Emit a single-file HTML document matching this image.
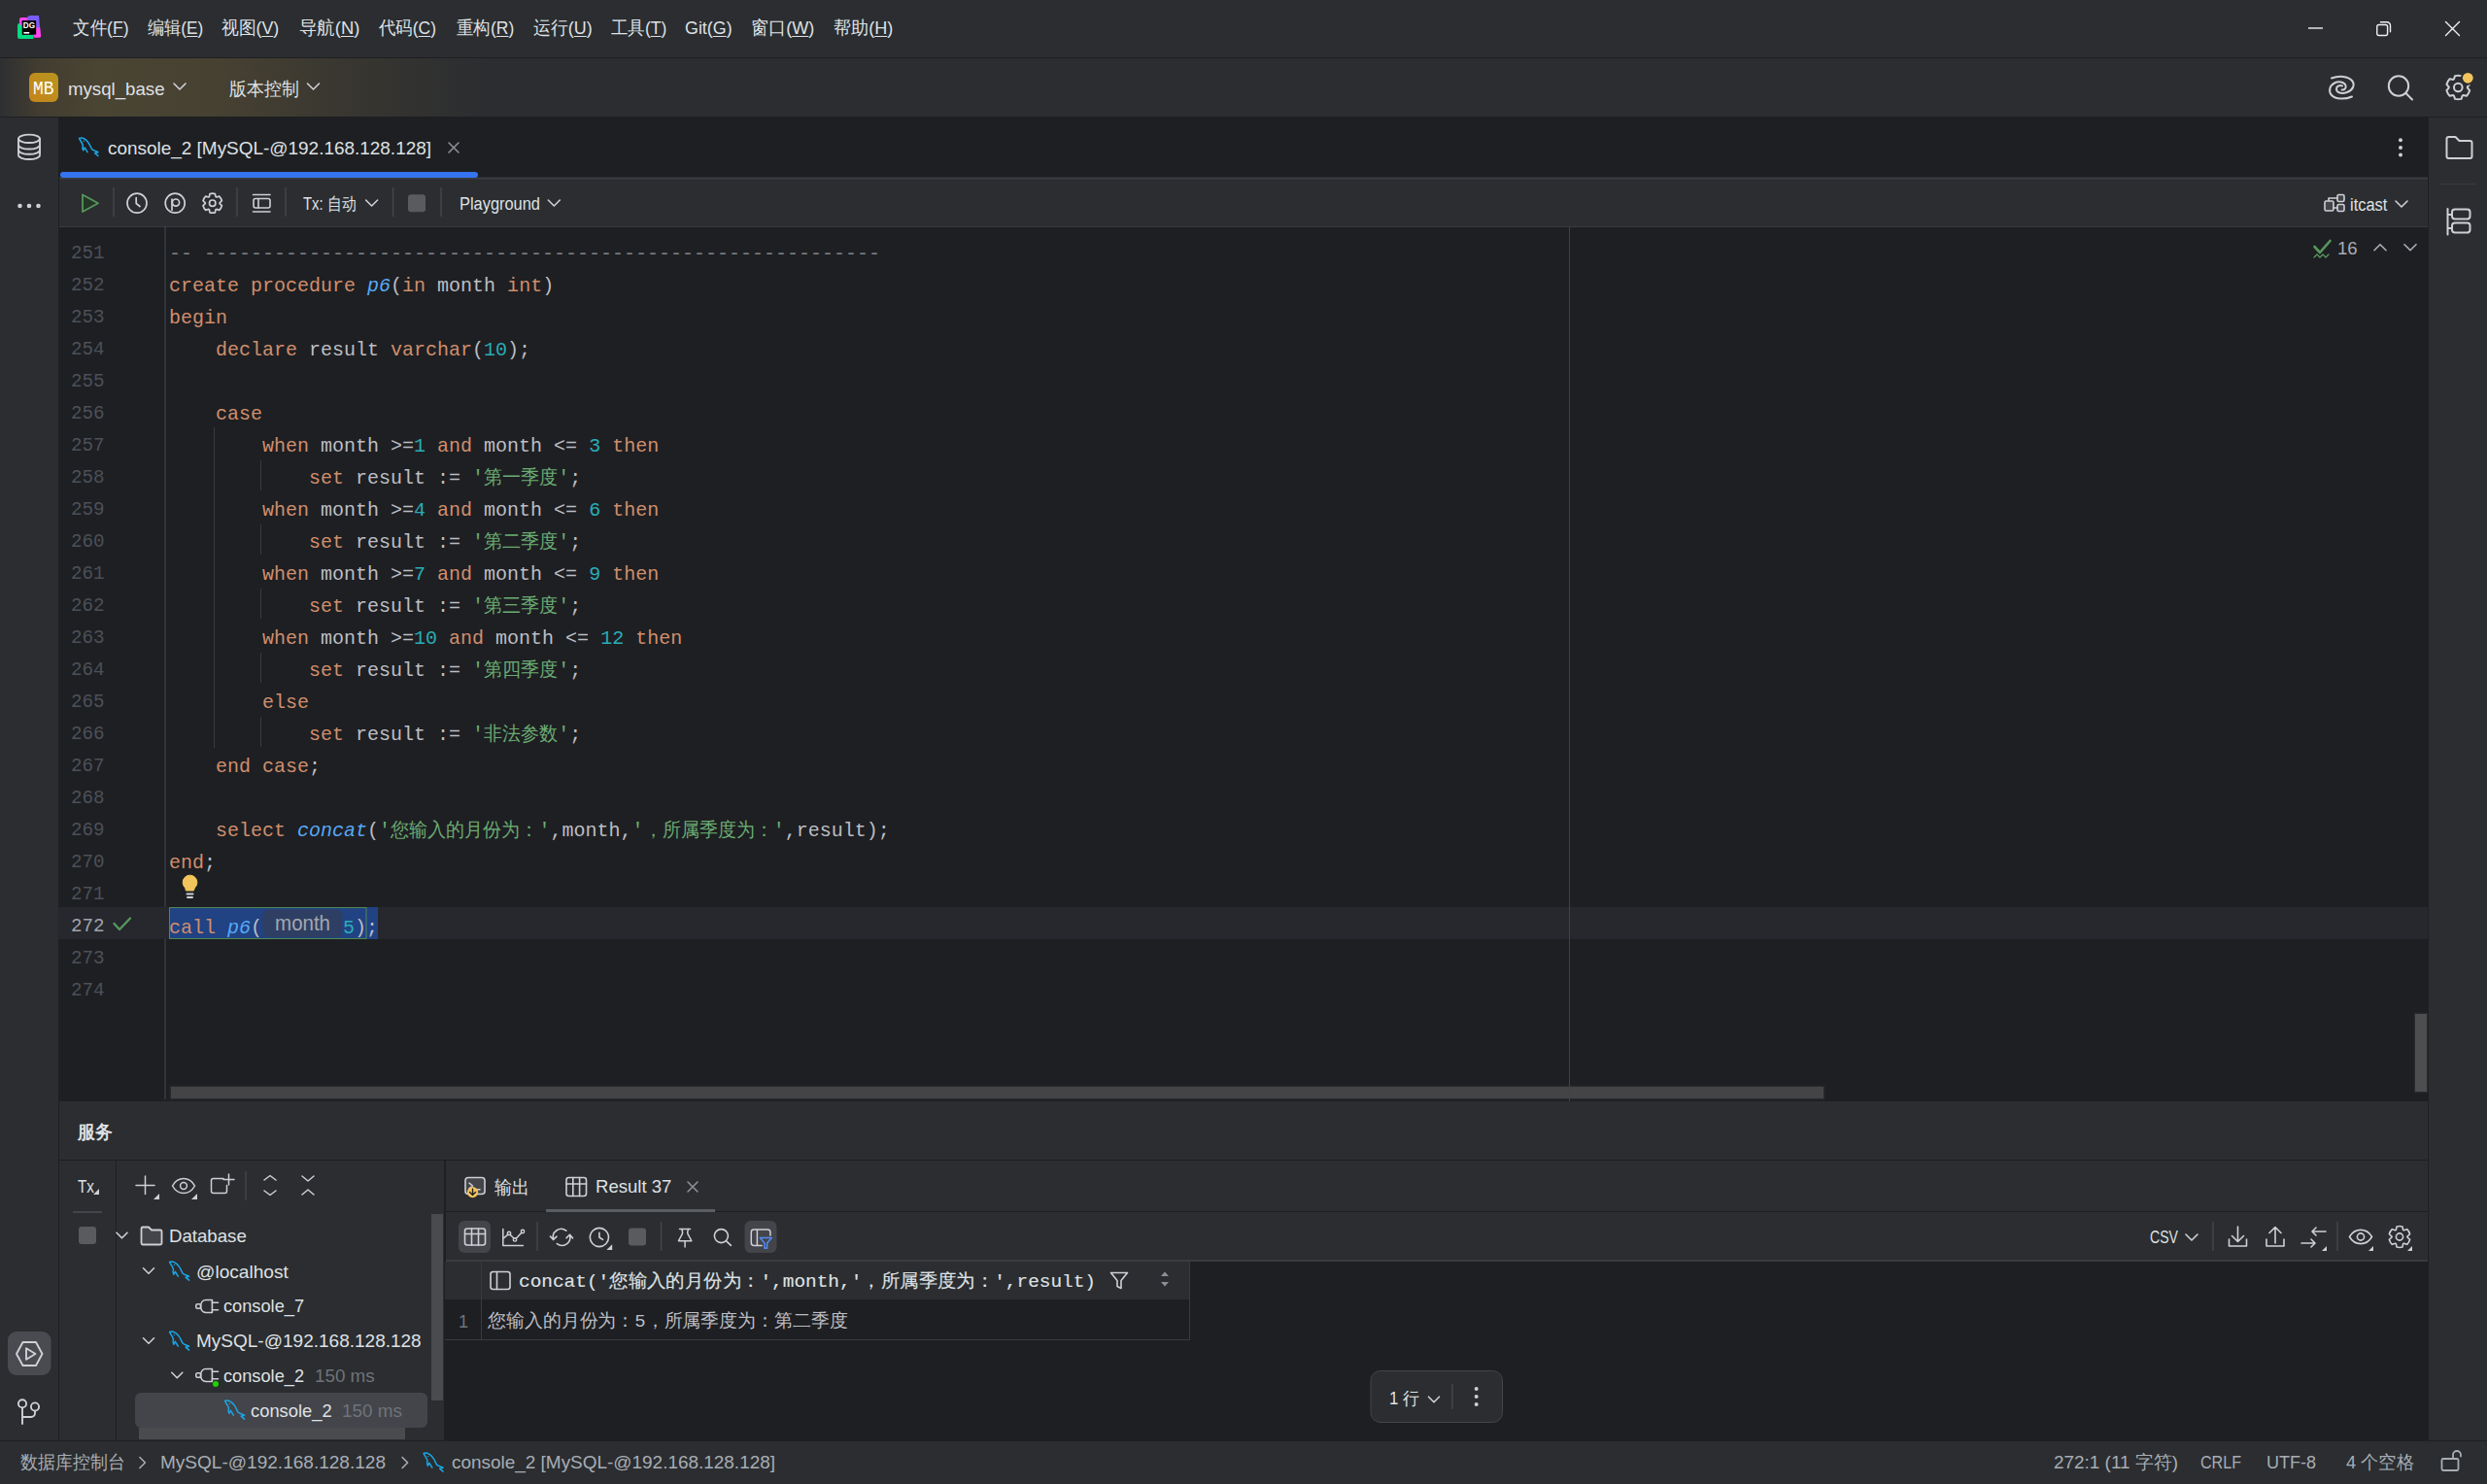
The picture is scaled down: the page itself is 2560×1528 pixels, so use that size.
<!DOCTYPE html><html><head><meta charset="utf-8"><style>
*{margin:0;padding:0;box-sizing:border-box}
html,body{width:2560px;height:1528px;overflow:hidden;background:#2B2D30}
body{position:relative;font-family:"Liberation Sans",sans-serif}
svg.ov{position:absolute;left:0;top:0}
.t{position:absolute;white-space:nowrap;transform-origin:0 50%}
.ln{position:absolute;left:60px;width:47.5px;text-align:right;font-family:"Liberation Mono",monospace;font-size:21px;line-height:33px;height:33px;transform:scaleX(0.915);transform-origin:100% 50%}
.cl{position:absolute;left:174px;font-family:"Liberation Mono",monospace;font-size:21px;line-height:33px;height:33px;white-space:pre;color:#BCBEC4;transform:scaleX(0.95238);transform-origin:0 50%}
.cj{font-size:19.95px}
.cj2{font-size:19px}
.hint{display:inline-block;width:87.15px;text-align:center;font-family:"Liberation Sans",sans-serif;font-size:21.5px;color:#A4A7AE;font-style:normal;position:relative;top:-3px}
u{text-decoration:underline;text-underline-offset:2px}
</style></head><body><svg class="ov" width="2560" height="1528" viewBox="0 0 2560 1528"><rect x="0.0" y="0.0" width="2560.0" height="1528.0" rx="0.0" fill="#2B2D30" /><rect x="0.0" y="0.0" width="2560.0" height="59.0" rx="0.0" fill="#2B2D30" /><rect x="0.0" y="59.0" width="2560.0" height="1.0" rx="0.0" fill="#1E1F22" /><defs><radialGradient id="pg" cx="200" cy="90" r="560" gradientUnits="userSpaceOnUse" gradientTransform="translate(200 90) scale(1 0.35) translate(-200 -90)"><stop offset="0" stop-color="#4C4432"/><stop offset="0.35" stop-color="#484232"/><stop offset="1" stop-color="#2B2D30"/></radialGradient><linearGradient id="mb" x1="0" y1="1" x2="1" y2="0"><stop offset="0" stop-color="#C6841B"/><stop offset="1" stop-color="#B8951F"/></linearGradient></defs><rect x="0.0" y="60.0" width="2560.0" height="60.0" rx="0.0" fill="#2B2D30" /><defs><linearGradient id="pg2" x1="0" y1="0" x2="500" y2="0" gradientUnits="userSpaceOnUse"><stop offset="0" stop-color="#2E2F31"/><stop offset="0.08" stop-color="#423D31"/><stop offset="0.2" stop-color="#4A4433"/><stop offset="0.45" stop-color="#474132"/><stop offset="0.72" stop-color="#383630"/><stop offset="1" stop-color="#2B2D30"/></linearGradient></defs><rect x="0.0" y="60.0" width="500.0" height="60.0" rx="0.0" fill="url(#pg2)" /><rect x="0.0" y="120.0" width="2560.0" height="1.0" rx="0.0" fill="#1E1F22" /><rect x="0.0" y="121.0" width="60.0" height="1363.0" rx="0.0" fill="#2B2D30" /><rect x="60.0" y="120.0" width="1.0" height="1364.0" rx="0.0" fill="#1E1F22" /><rect x="2500.0" y="121.0" width="60.0" height="1363.0" rx="0.0" fill="#2B2D30" /><rect x="2499.0" y="120.0" width="1.0" height="1364.0" rx="0.0" fill="#1E1F22" /><rect x="60.0" y="121.0" width="2439.0" height="61.0" rx="0.0" fill="#1E1F22" /><rect x="60.0" y="183.0" width="2439.0" height="50.0" rx="0.0" fill="#2B2D30" /><rect x="60.0" y="183.0" width="2439.0" height="1.6" rx="0.0" fill="#3A3C41" /><rect x="60.0" y="233.0" width="2439.0" height="1.0" rx="0.0" fill="#393B40" /><rect x="60.0" y="234.0" width="2439.0" height="900.0" rx="0.0" fill="#1E1F22" /><rect x="60.0" y="1134.0" width="2439.0" height="60.0" rx="0.0" fill="#2B2D30" /><rect x="60.0" y="1194.0" width="2439.0" height="1.0" rx="0.0" fill="#1E1F22" /><rect x="60.0" y="1195.0" width="2439.0" height="289.0" rx="0.0" fill="#2B2D30" /><rect x="0.0" y="1483.0" width="2560.0" height="1.0" rx="0.0" fill="#1E1F22" /><rect x="0.0" y="1484.0" width="2560.0" height="44.0" rx="0.0" fill="#2B2D30" /><rect x="60.0" y="120.0" width="1.0" height="1364.0" rx="0.0" fill="#1E1F22" /><rect x="2499.0" y="120.0" width="1.0" height="1364.0" rx="0.0" fill="#1E1F22" /><g><path d="M18 26 Q18 24 20 24 L23 24 L23 36 L34 36 L34.5 40 L20 40 Q18 40 18 38 Z" fill="#00DC82"/><path d="M20 20 Q20 18 22 18 L27.5 18 L29.5 21.2 L22.7 21.2 L22.7 27.5 L20 24.5 Z" fill="#FF45ED"/><path d="M27.5 18.5 Q28.5 16 31 16 L40 16 L41.2 29 L37.1 29 L37.1 21.2 L29.5 21.2 Z" fill="#7B5CFA"/><path d="M37.1 28.5 L41.3 28.5 L42.2 37 Q42.2 38.7 40.5 38.7 L34.5 38.7 L34 35.5 L37.1 35.5 Z" fill="#FF45ED"/><rect x="22.7" y="21.2" width="14.4" height="14.3" fill="#000"/><text x="23.8" y="29" font-family="Liberation Sans" font-weight="bold" font-size="8.2" fill="#fff">DG</text><rect x="24.4" y="33" width="5.8" height="1.6" fill="#fff"/></g><line x1="2376.0" y1="29.0" x2="2391.0" y2="29.0" stroke="#F0F0F0" stroke-width="1.4"/><rect x="2446.8" y="25.5" width="10.8" height="11.0" rx="2.0" fill="none" stroke="#F0F0F0" stroke-width="1.4"/><path d="M2450.5 22.7 h6.5 a3.5 3.5 0 0 1 3.5 3.5 v6.5" stroke="#F0F0F0" stroke-width="1.4" fill="none" stroke-linecap="round" stroke-linejoin="round" /><path d="M2517.5 22.5 L2531.5 36.5 M2531.5 22.5 L2517.5 36.5" stroke="#F0F0F0" stroke-width="1.4" fill="none" stroke-linecap="round" stroke-linejoin="round" /><rect x="30.0" y="75.0" width="30.0" height="30.0" rx="6.0" fill="url(#mb)" /><path d="M179.0 86.0 L185.0 92.0 L191.0 86.0" stroke="#CED0D6" stroke-width="1.6" fill="none" stroke-linecap="round" stroke-linejoin="round" /><path d="M316.5 86.0 L322.5 92.0 L328.5 86.0" stroke="#CED0D6" stroke-width="1.6" fill="none" stroke-linecap="round" stroke-linejoin="round" /><path d="M2400 80.5 C2408 77.5 2417 78.5 2421 83 C2424.5 87 2422 93 2416 95 C2410 97 2405 95.5 2405 91.5 C2405 88.5 2408.5 87.5 2411 88.5 M2421 99.5 C2414 102.5 2404 102.5 2400 98 C2396.5 94 2398 88 2403 85.5 C2407 83.5 2413 84 2414.5 88 C2415.5 91 2413 93 2410.5 92.5" stroke="#CED0D6" stroke-width="2" fill="none" stroke-linecap="round" stroke-linejoin="round" /><circle cx="2469" cy="88.5" r="10.2" stroke="#CED0D6" stroke-width="2" fill="none"/><path d="M2476.5 96 L2483 102.5" stroke="#CED0D6" stroke-width="2" fill="none" stroke-linecap="round" stroke-linejoin="round" /><path d="M2525.95 81.44 L2527.02 78.15 A12.30 12.30 0 0 1 2533.58 78.15 L2534.65 81.44 A9.60 9.60 0 0 1 2535.54 81.96 L2538.93 81.23 A12.30 12.30 0 0 1 2542.21 86.91 L2539.89 89.49 A9.60 9.60 0 0 1 2539.89 90.51 L2542.21 93.09 A12.30 12.30 0 0 1 2538.93 98.77 L2535.54 98.04 A9.60 9.60 0 0 1 2534.65 98.56 L2533.58 101.85 A12.30 12.30 0 0 1 2527.02 101.85 L2525.95 98.56 A9.60 9.60 0 0 1 2525.06 98.04 L2521.67 98.77 A12.30 12.30 0 0 1 2518.39 93.09 L2520.71 90.51 A9.60 9.60 0 0 1 2520.71 89.49 L2518.39 86.91 A12.30 12.30 0 0 1 2521.67 81.23 L2525.06 81.96 A9.60 9.60 0 0 1 2525.95 81.44 Z" stroke="#CED0D6" stroke-width="2" fill="none" stroke-linecap="round" stroke-linejoin="round" /><circle cx="2530.3" cy="90.0" r="4.3" stroke="#CED0D6" stroke-width="2" fill="none"/><circle cx="2540.3" cy="80.3" r="7.5" fill="#2B2D30"/><circle cx="2540.3" cy="80.3" r="5.4" fill="#F2C55C"/><g stroke="#CED0D6" stroke-width="1.9" fill="none"><ellipse cx="30" cy="142.8" rx="11" ry="4.2"/><path d="M19 142.8 V159.8 M41 142.8 V159.8"/><path d="M19 149.3 a11 4.2 0 0 0 22 0 M19 154.6 a11 4.2 0 0 0 22 0 M19 159.8 a11 4.2 0 0 0 22 0"/></g><circle cx="20.5" cy="212" r="2.3" fill="#CED0D6"/><circle cx="30.0" cy="212" r="2.3" fill="#CED0D6"/><circle cx="39.5" cy="212" r="2.3" fill="#CED0D6"/><rect x="8.0" y="1371.0" width="44.5" height="45.0" rx="9.0" fill="#4A4B50" /><path d="M23.5 1382 L37 1382 L43.5 1394 L37 1406 L23.5 1406 L17 1394 Z" stroke="#CED0D6" stroke-width="1.9" fill="none" stroke-linecap="round" stroke-linejoin="round" /><path d="M27 1388.2 L36.5 1394 L27 1399.8 Z" stroke="#CED0D6" stroke-width="1.9" fill="none" stroke-linecap="round" stroke-linejoin="round" /><circle cx="23" cy="1445.3" r="4.1" stroke="#CED0D6" stroke-width="1.9" fill="none"/><circle cx="36" cy="1448.5" r="4.1" stroke="#CED0D6" stroke-width="1.9" fill="none"/><path d="M23 1449.5 V1466 M36 1452.6 V1455 a4 4 0 0 1 -4 4 H23" stroke="#CED0D6" stroke-width="1.9" fill="none" stroke-linecap="round" stroke-linejoin="round" /><path d="M2518.5 143 a2 2 0 0 1 2-2 h7 l4 4 h11 a2 2 0 0 1 2 2 v14 a2 2 0 0 1 -2 2 h-22 a2 2 0 0 1 -2-2 z" stroke="#CED0D6" stroke-width="2" fill="none" stroke-linecap="round" stroke-linejoin="round" /><line x1="2512.0" y1="189.5" x2="2548.0" y2="189.5" stroke="#393B40" stroke-width="1"/><path d="M2519.5 215 V241.5" stroke="#CED0D6" stroke-width="2" fill="none" stroke-linecap="round" stroke-linejoin="round" /><path d="M2520 221 h3 M2520 235 h3" stroke="#CED0D6" stroke-width="2" fill="none" stroke-linecap="round" stroke-linejoin="round" /><rect x="2524.0" y="215.5" width="18.5" height="10.0" rx="3.0" fill="none" stroke="#CED0D6" stroke-width="2"/><rect x="2524.0" y="229.5" width="18.5" height="10.0" rx="3.0" fill="none" stroke="#CED0D6" stroke-width="2"/><g transform="translate(81.0 141.0) scale(0.950)"><path d="M0.5 1.5 C3 0.5 7 2 10 5.5 C12 8 13.5 12 14.5 13.5 C16 15 19 15.5 21 16.5 L17.5 17.5 L21 20.5 M0.5 1.5 C2 4 4 7 4.5 9 C4 11 4 13 5 14.5 L6.5 11.5 L9.5 16.5" stroke="#1AA7E8" stroke-width="1.58" fill="none" stroke-linejoin="round" stroke-linecap="round"/><circle cx="5.5" cy="4.5" r="0.7" fill="#1AA7E8"/></g><path d="M462 147 L472 157 M472 147 L462 157" stroke="#8C8F96" stroke-width="1.6" fill="none" stroke-linecap="round" stroke-linejoin="round" /><rect x="62.0" y="177.0" width="430.0" height="6.0" rx="3.0" fill="#3574F0" /><circle cx="2471" cy="144.3" r="2" fill="#CED0D6"/><circle cx="2471" cy="152.0" r="2" fill="#CED0D6"/><circle cx="2471" cy="159.6" r="2" fill="#CED0D6"/><path d="M85 200.5 L101 209.2 L85 218 Z" stroke="#57965C" stroke-width="1.8" fill="#253627" stroke-linecap="round" stroke-linejoin="round" /><line x1="117.0" y1="193.0" x2="117.0" y2="223.0" stroke="#43454A" stroke-width="1.5"/><line x1="244.0" y1="193.0" x2="244.0" y2="223.0" stroke="#43454A" stroke-width="1.5"/><line x1="294.0" y1="193.0" x2="294.0" y2="223.0" stroke="#43454A" stroke-width="1.5"/><line x1="404.6" y1="193.0" x2="404.6" y2="223.0" stroke="#43454A" stroke-width="1.5"/><line x1="454.0" y1="193.0" x2="454.0" y2="223.0" stroke="#43454A" stroke-width="1.5"/><circle cx="141" cy="209.2" r="10" stroke="#CED0D6" stroke-width="1.7" fill="none"/><path d="M140.2 203.5 V209.5 L144 212.5" stroke="#CED0D6" stroke-width="1.7" fill="none" stroke-linecap="round" stroke-linejoin="round" /><circle cx="180.2" cy="209.2" r="10" stroke="#CED0D6" stroke-width="1.7" fill="none"/><path d="M177 216.5 V205" stroke="#CED0D6" stroke-width="1.7" fill="none" stroke-linecap="round" stroke-linejoin="round" /><circle cx="181" cy="208.6" r="3.6" stroke="#CED0D6" stroke-width="1.7" fill="none"/><path d="M215.35 202.60 L216.03 199.56 A10.00 10.00 0 0 1 221.37 199.56 L222.05 202.60 A7.40 7.40 0 0 1 222.74 203.00 L225.71 202.07 A10.00 10.00 0 0 1 228.38 206.69 L226.09 208.80 A7.40 7.40 0 0 1 226.09 209.60 L228.38 211.71 A10.00 10.00 0 0 1 225.71 216.33 L222.74 215.40 A7.40 7.40 0 0 1 222.05 215.80 L221.37 218.84 A10.00 10.00 0 0 1 216.03 218.84 L215.35 215.80 A7.40 7.40 0 0 1 214.66 215.40 L211.69 216.33 A10.00 10.00 0 0 1 209.02 211.71 L211.31 209.60 A7.40 7.40 0 0 1 211.31 208.80 L209.02 206.69 A10.00 10.00 0 0 1 211.69 202.07 L214.66 203.00 A7.40 7.40 0 0 1 215.35 202.60 Z" stroke="#CED0D6" stroke-width="1.7" fill="none" stroke-linecap="round" stroke-linejoin="round" /><circle cx="218.7" cy="209.2" r="3.2" stroke="#CED0D6" stroke-width="1.7" fill="none"/><path d="M260.5 200.5 h17.5 M260.5 218 h17.5" stroke="#CED0D6" stroke-width="1.6" fill="none" stroke-linecap="round" stroke-linejoin="round" /><rect x="261.0" y="204.5" width="17.0" height="9.5" rx="2.0" fill="none" stroke="#CED0D6" stroke-width="1.6"/><path d="M266 205 v9" stroke="#CED0D6" stroke-width="1.6" fill="none" stroke-linecap="round" stroke-linejoin="round" /><path d="M376.6 206.0 L382.6 212.0 L388.6 206.0" stroke="#CED0D6" stroke-width="1.6" fill="none" stroke-linecap="round" stroke-linejoin="round" /><rect x="420.0" y="200.3" width="18.0" height="18.0" rx="3.0" fill="#5A5B5E" /><path d="M564.3 206.0 L570.3 212.0 L576.3 206.0" stroke="#CED0D6" stroke-width="1.6" fill="none" stroke-linecap="round" stroke-linejoin="round" /><rect x="2393.0" y="207.0" width="9.0" height="10.0" rx="1.5" fill="#43454A" stroke="#CED0D6" stroke-width="1.6"/><rect x="2406.0" y="200.5" width="7.0" height="7.0" rx="1.5" fill="#43454A" stroke="#CED0D6" stroke-width="1.6"/><rect x="2406.0" y="210.5" width="7.0" height="7.0" rx="1.5" fill="#43454A" stroke="#CED0D6" stroke-width="1.6"/><path d="M2397 206.5 V204 h9 M2402 214 h4" stroke="#CED0D6" stroke-width="1.6" fill="none" stroke-linecap="round" stroke-linejoin="round" /><path d="M2466.0 207.0 L2472.0 213.0 L2478.0 207.0" stroke="#CED0D6" stroke-width="1.6" fill="none" stroke-linecap="round" stroke-linejoin="round" /><rect x="169.0" y="234.0" width="2.0" height="898.0" rx="0.0" fill="#313438" /><rect x="60.0" y="934.0" width="2439.0" height="33.0" rx="0.0" fill="#26282E" /><rect x="174.0" y="934.0" width="215.0" height="33.0" rx="0.0" fill="#214283" /><rect x="174.5" y="934.5" width="202.5" height="32.0" rx="0.0" fill="none" stroke="#4E8A52" stroke-width="1"/><rect x="270.5" y="936.5" width="82.0" height="28.5" rx="6.0" fill="#2E3F63" /><rect x="220.0" y="440.0" width="1.0" height="330.0" rx="0.0" fill="#393B40" /><rect x="268.0" y="474.0" width="1.0" height="31.0" rx="0.0" fill="#393B40" /><rect x="268.0" y="540.0" width="1.0" height="31.0" rx="0.0" fill="#393B40" /><rect x="268.0" y="606.0" width="1.0" height="31.0" rx="0.0" fill="#393B40" /><rect x="268.0" y="672.0" width="1.0" height="31.0" rx="0.0" fill="#393B40" /><rect x="268.0" y="738.0" width="1.0" height="31.0" rx="0.0" fill="#393B40" /><path d="M190.5 914 a7.4 7.4 0 1 1 10 0 l-1.2 3 h-7.6 z" stroke="#F2C55C" stroke-width="1" fill="#F2C55C" stroke-linecap="round" stroke-linejoin="round" /><rect x="191.5" y="919.5" width="8.0" height="2.0" rx="1.0" fill="#CED0D6" /><rect x="192.0" y="923.0" width="7.0" height="2.0" rx="1.0" fill="#CED0D6" /><path d="M117.5 951 L123 957 L134 945.5" stroke="#57965C" stroke-width="2.4" fill="none" stroke-linecap="round" stroke-linejoin="round" /><path d="M2382.5 254 L2388 260 L2398.5 248" stroke="#57965C" stroke-width="2.6" fill="none" stroke-linecap="round" stroke-linejoin="round" /><path d="M2382 265 l3 -3 l3 3 l3 -3 l3 3 l3 -3" stroke="#57965C" stroke-width="1.4" fill="none" stroke-linecap="round" stroke-linejoin="round" /><path d="M2444.0 257.7 L2450.0 251.7 L2456.0 257.7" stroke="#A8ADB5" stroke-width="1.6" fill="none" stroke-linecap="round" stroke-linejoin="round" /><path d="M2475.0 251.7 L2481.0 257.7 L2487.0 251.7" stroke="#A8ADB5" stroke-width="1.6" fill="none" stroke-linecap="round" stroke-linejoin="round" /><rect x="2484.5" y="1042.5" width="15.0" height="83.0" rx="1.0" fill="#28292B" /><rect x="2486.0" y="1044.0" width="12.0" height="80.0" rx="0.0" fill="#4D4E50" /><rect x="174.5" y="1117.5" width="1704.0" height="15.0" rx="0.0" fill="#28292B" /><rect x="176.0" y="1119.0" width="1701.0" height="12.0" rx="0.0" fill="#444446" /><rect x="1615.0" y="234.0" width="1.0" height="900.0" rx="0.0" fill="#404247" /><rect x="119.0" y="1195.0" width="1.0" height="288.0" rx="0.0" fill="#1E1F22" /><rect x="457.0" y="1195.0" width="2.0" height="288.0" rx="0.0" fill="#1E1F22" /><path d="M96 1230 L102 1224 L102 1230 Z" fill="#CED0D6"/><rect x="75.0" y="1247.0" width="30.0" height="2.0" rx="0.0" fill="#43454A" /><rect x="81.0" y="1263.0" width="18.0" height="18.0" rx="3.0" fill="#5A5B5E" /><path d="M149.5 1211 V1229.5 M140 1220.5 H159" stroke="#CED0D6" stroke-width="1.5" fill="none" stroke-linecap="round" stroke-linejoin="round" /><path d="M158 1235 L164 1229 L164 1235 Z" fill="#CED0D6"/><path d="M177.5 1221 C183 1211 195 1211 200.5 1221 C195 1231 183 1231 177.5 1221 Z" stroke="#CED0D6" stroke-width="1.5" fill="none" stroke-linecap="round" stroke-linejoin="round" /><circle cx="189" cy="1221" r="3.4" stroke="#CED0D6" stroke-width="1.5" fill="none"/><path d="M197 1235 L203 1229 L203 1235 Z" fill="#CED0D6"/><path d="M230 1213.5 h-10.5 a2 2 0 0 0 -2 2 v11 a2 2 0 0 0 2 2 h12 a2 2 0 0 0 2 -2 v-6" stroke="#CED0D6" stroke-width="1.5" fill="none" stroke-linecap="round" stroke-linejoin="round" /><path d="M235.5 1209 V1220 M230 1214.5 H241" stroke="#CED0D6" stroke-width="1.5" fill="none" stroke-linecap="round" stroke-linejoin="round" /><line x1="253.0" y1="1206.0" x2="253.0" y2="1236.0" stroke="#43454A" stroke-width="1.5"/><path d="M272 1215 L278 1210.5 L284 1215 M272 1226 L278 1230.5 L284 1226" stroke="#CED0D6" stroke-width="1.5" fill="none" stroke-linecap="round" stroke-linejoin="round" /><path d="M311 1211 L317 1216 L323 1211 M311 1230 L317 1225 L323 1230" stroke="#CED0D6" stroke-width="1.5" fill="none" stroke-linecap="round" stroke-linejoin="round" /><rect x="444.0" y="1250.0" width="12.0" height="192.0" rx="0.0" fill="#4A4B4E" /><rect x="139.0" y="1434.0" width="301.0" height="36.0" rx="6.0" fill="#43454A" /><rect x="143.0" y="1470.0" width="274.0" height="12.0" rx="0.0" fill="#4A4B4E" /><path d="M120.0 1269.2 L125.5 1274.8 L131.0 1269.2" stroke="#CED0D6" stroke-width="1.6" fill="none" stroke-linecap="round" stroke-linejoin="round" /><path d="M145.5 1265 a1.5 1.5 0 0 1 1.5 -1.5 h6 l3 3 h9 a1.5 1.5 0 0 1 1.5 1.5 v12 a1.5 1.5 0 0 1 -1.5 1.5 h-18 a1.5 1.5 0 0 1 -1.5 -1.5 z" stroke="#CED0D6" stroke-width="1.8" fill="#43454A" stroke-linecap="round" stroke-linejoin="round" /><path d="M147.5 1305.8 L153.0 1311.2 L158.5 1305.8" stroke="#CED0D6" stroke-width="1.6" fill="none" stroke-linecap="round" stroke-linejoin="round" /><g transform="translate(174.0 1298.0) scale(0.980)"><path d="M0.5 1.5 C3 0.5 7 2 10 5.5 C12 8 13.5 12 14.5 13.5 C16 15 19 15.5 21 16.5 L17.5 17.5 L21 20.5 M0.5 1.5 C2 4 4 7 4.5 9 C4 11 4 13 5 14.5 L6.5 11.5 L9.5 16.5" stroke="#1AA7E8" stroke-width="1.53" fill="none" stroke-linejoin="round" stroke-linecap="round"/><circle cx="5.5" cy="4.5" r="0.7" fill="#1AA7E8"/></g><path d="M218.4 1338.5 V1351.5 H212.0 C208.5 1351.5 206.6 1348.5 206.6 1345.0 C206.6 1341.5 208.5 1338.5 212.0 1338.5 Z" stroke="#CED0D6" stroke-width="1.6" fill="none" stroke-linecap="round" stroke-linejoin="round" /><rect x="201.8" y="1342.8" width="4.8" height="4.5" rx="1.5" fill="none" stroke="#CED0D6" stroke-width="1.6"/><path d="M218.4 1341.3 H224.5 M218.4 1348.7 H224.5" stroke="#CED0D6" stroke-width="1.6" fill="none" stroke-linecap="round" stroke-linejoin="round" /><path d="M147.5 1377.8 L153.0 1383.2 L158.5 1377.8" stroke="#CED0D6" stroke-width="1.6" fill="none" stroke-linecap="round" stroke-linejoin="round" /><g transform="translate(174.0 1370.0) scale(0.980)"><path d="M0.5 1.5 C3 0.5 7 2 10 5.5 C12 8 13.5 12 14.5 13.5 C16 15 19 15.5 21 16.5 L17.5 17.5 L21 20.5 M0.5 1.5 C2 4 4 7 4.5 9 C4 11 4 13 5 14.5 L6.5 11.5 L9.5 16.5" stroke="#1AA7E8" stroke-width="1.53" fill="none" stroke-linejoin="round" stroke-linecap="round"/><circle cx="5.5" cy="4.5" r="0.7" fill="#1AA7E8"/></g><path d="M176.8 1413.2 L182.3 1418.8 L187.8 1413.2" stroke="#CED0D6" stroke-width="1.6" fill="none" stroke-linecap="round" stroke-linejoin="round" /><path d="M218.4 1409.5 V1422.5 H212.0 C208.5 1422.5 206.6 1419.5 206.6 1416.0 C206.6 1412.5 208.5 1409.5 212.0 1409.5 Z" stroke="#CED0D6" stroke-width="1.6" fill="none" stroke-linecap="round" stroke-linejoin="round" /><rect x="201.8" y="1413.8" width="4.8" height="4.5" rx="1.5" fill="none" stroke="#CED0D6" stroke-width="1.6"/><path d="M218.4 1412.3 H224.5 M218.4 1419.7 H224.5" stroke="#CED0D6" stroke-width="1.6" fill="none" stroke-linecap="round" stroke-linejoin="round" /><circle cx="222" cy="1425" r="3.6" fill="#2B2D30"/><circle cx="222" cy="1425" r="3" fill="#1ED200"/><g transform="translate(231.0 1441.0) scale(0.980)"><path d="M0.5 1.5 C3 0.5 7 2 10 5.5 C12 8 13.5 12 14.5 13.5 C16 15 19 15.5 21 16.5 L17.5 17.5 L21 20.5 M0.5 1.5 C2 4 4 7 4.5 9 C4 11 4 13 5 14.5 L6.5 11.5 L9.5 16.5" stroke="#1AA7E8" stroke-width="1.53" fill="none" stroke-linejoin="round" stroke-linecap="round"/><circle cx="5.5" cy="4.5" r="0.7" fill="#1AA7E8"/></g><rect x="458.0" y="1247.0" width="2041.0" height="1.0" rx="0.0" fill="#1E1F22" /><rect x="479.0" y="1212.5" width="20.0" height="17.0" rx="3.0" fill="#43454A" stroke="#CED0D6" stroke-width="1.6"/><path d="M483 1218.2 L486.5 1221 L483 1223.8 M491.2 1224.8 H494" stroke="#CED0D6" stroke-width="1.5" fill="none" stroke-linecap="round" stroke-linejoin="round" /><circle cx="486.5" cy="1227.6" r="5.6" fill="#F2C55C"/><path d="M486.5 1224.2 V1230.4 M483.5 1227.6 L486.5 1230.4 L489.5 1227.6" stroke="#1E1F22" stroke-width="1.4" fill="none" stroke-linecap="round" stroke-linejoin="round" /><rect x="583.0" y="1212.5" width="20.5" height="19.0" rx="2.5" fill="none" stroke="#CED0D6" stroke-width="1.6"/><path d="M583 1219 h20.5 M589.8 1212.5 v19 M596.6 1212.5 v19" stroke="#CED0D6" stroke-width="1.6" fill="none" stroke-linecap="round" stroke-linejoin="round" /><path d="M708 1217 L718 1227 M718 1217 L708 1227" stroke="#8C8F96" stroke-width="1.6" fill="none" stroke-linecap="round" stroke-linejoin="round" /><rect x="562.0" y="1245.0" width="174.0" height="3.0" rx="0.0" fill="#5A5D63" /><rect x="459.0" y="1297.0" width="2040.0" height="2.0" rx="0.0" fill="#393B40" /><rect x="472.0" y="1257.0" width="33.0" height="33.0" rx="6.0" fill="#43454A" /><rect x="478.5" y="1265.0" width="21.0" height="17.0" rx="2.5" fill="none" stroke="#CED0D6" stroke-width="1.6"/><path d="M478.5 1270.5 h21 M485.5 1265 v17 M492.5 1265 v17" stroke="#CED0D6" stroke-width="1.6" fill="none" stroke-linecap="round" stroke-linejoin="round" /><path d="M517.8 1265.4 V1282.5 H538.4 M517.8 1275.5 L522.8 1271.1 M525.1 1271.3 L528.9 1275 M531.2 1275.2 L536.8 1269.3" stroke="#CED0D6" stroke-width="1.5" fill="none" stroke-linecap="round" stroke-linejoin="round" /><circle cx="524" cy="1270" r="1.7" stroke="#CED0D6" stroke-width="1.4" fill="none"/><circle cx="530" cy="1276.4" r="1.7" stroke="#CED0D6" stroke-width="1.4" fill="none"/><circle cx="538" cy="1268" r="1.7" stroke="#CED0D6" stroke-width="1.4" fill="none"/><line x1="553.0" y1="1258.0" x2="553.0" y2="1288.0" stroke="#43454A" stroke-width="1.5"/><path d="M582.8 1267.2 A8.3 8.3 0 0 0 569.6 1275.8 M566.4 1273 L569.6 1276.4 L573 1273.2 M573.4 1280.6 A8.3 8.3 0 0 0 586.6 1272.2 M583.1 1274.6 L586.5 1271.2 L589.5 1274.8" stroke="#CED0D6" stroke-width="1.6" fill="none" stroke-linecap="round" stroke-linejoin="round" /><circle cx="616.9" cy="1274" r="9.6" stroke="#CED0D6" stroke-width="1.6" fill="none"/><path d="M616.9 1269.2 V1274 L620.5 1276.4" stroke="#CED0D6" stroke-width="1.6" fill="none" stroke-linecap="round" stroke-linejoin="round" /><path d="M624.3 1287 L630.2 1281.2 L630.2 1287 Z" fill="#CED0D6"/><rect x="647.0" y="1264.5" width="18.0" height="18.0" rx="3.0" fill="#5A5B5E" /><line x1="680.6" y1="1258.0" x2="680.6" y2="1288.0" stroke="#43454A" stroke-width="1.5"/><path d="M699.5 1265.4 H710.5 M701.5 1265.4 C703 1268 703 1270 701.5 1272 L698.5 1277.7 H711.8 L708.8 1272 C707.3 1270 707.3 1268 708.8 1265.4 M705.1 1277.7 V1284" stroke="#CED0D6" stroke-width="1.5" fill="none" stroke-linecap="round" stroke-linejoin="round" /><circle cx="742.4" cy="1272.6" r="7" stroke="#CED0D6" stroke-width="1.6" fill="none"/><path d="M747.6 1277.8 L752.4 1282.4" stroke="#CED0D6" stroke-width="1.6" fill="none" stroke-linecap="round" stroke-linejoin="round" /><rect x="766.5" y="1257.0" width="33.0" height="33.0" rx="6.0" fill="#43454A" /><path d="M784.2 1282.5 H776 a2.7 2.7 0 0 1 -2.7 -2.7 V1268.6 a2.7 2.7 0 0 1 2.7 -2.7 H790.2 a2.7 2.7 0 0 1 2.7 2.7 V1271.9 M779.4 1266 V1282.5" stroke="#CED0D6" stroke-width="1.5" fill="none" stroke-linecap="round" stroke-linejoin="round" /><path d="M782.3 1274.6 H794.3 L789.6 1280 V1285.2 H787 V1280 Z" stroke="#548AF7" stroke-width="1.5" fill="none" stroke-linecap="round" stroke-linejoin="round" /><path d="M2250.0 1271.0 L2256.0 1277.0 L2262.0 1271.0" stroke="#CED0D6" stroke-width="1.6" fill="none" stroke-linecap="round" stroke-linejoin="round" /><line x1="2278.0" y1="1258.0" x2="2278.0" y2="1288.0" stroke="#43454A" stroke-width="1.5"/><path d="M2303.5 1263 V1278 M2297.5 1272.5 L2303.5 1278.5 L2309.5 1272.5 M2294.5 1276 v7 h18 v-7" stroke="#CED0D6" stroke-width="1.6" fill="none" stroke-linecap="round" stroke-linejoin="round" /><path d="M2342 1280 V1264 M2336 1269.5 L2342 1263.5 L2348 1269.5 M2333 1276 v7 h18 v-7" stroke="#CED0D6" stroke-width="1.6" fill="none" stroke-linecap="round" stroke-linejoin="round" /><path d="M2369 1280 h14 M2379 1276 l4 4 l-4 4 M2394 1268 h-14 M2384 1264 l-4 4 l4 4" stroke="#CED0D6" stroke-width="1.6" fill="none" stroke-linecap="round" stroke-linejoin="round" /><path d="M2390 1288 L2395 1283 L2395 1288 Z" fill="#CED0D6"/><line x1="2406.0" y1="1258.0" x2="2406.0" y2="1288.0" stroke="#43454A" stroke-width="1.5"/><path d="M2418.5 1273.5 C2424 1264 2436 1264 2441.5 1273.5 C2436 1283 2424 1283 2418.5 1273.5 Z" stroke="#CED0D6" stroke-width="1.6" fill="none" stroke-linecap="round" stroke-linejoin="round" /><circle cx="2430" cy="1273.5" r="3.6" stroke="#CED0D6" stroke-width="1.6" fill="none"/><path d="M2438 1288 L2443 1283 L2443 1288 Z" fill="#CED0D6"/><path d="M2466.38 1266.37 L2467.07 1262.90 A11.00 11.00 0 0 1 2472.93 1262.90 L2473.62 1266.37 A8.00 8.00 0 0 1 2474.37 1266.80 L2477.71 1265.66 A11.00 11.00 0 0 1 2480.65 1270.74 L2477.99 1273.07 A8.00 8.00 0 0 1 2477.99 1273.93 L2480.65 1276.26 A11.00 11.00 0 0 1 2477.71 1281.34 L2474.37 1280.20 A8.00 8.00 0 0 1 2473.62 1280.63 L2472.93 1284.10 A11.00 11.00 0 0 1 2467.07 1284.10 L2466.38 1280.63 A8.00 8.00 0 0 1 2465.63 1280.20 L2462.29 1281.34 A11.00 11.00 0 0 1 2459.35 1276.26 L2462.01 1273.93 A8.00 8.00 0 0 1 2462.01 1273.07 L2459.35 1270.74 A11.00 11.00 0 0 1 2462.29 1265.66 L2465.63 1266.80 A8.00 8.00 0 0 1 2466.38 1266.37 Z" stroke="#CED0D6" stroke-width="1.6" fill="none" stroke-linecap="round" stroke-linejoin="round" /><circle cx="2470.0" cy="1273.5" r="3.6" stroke="#CED0D6" stroke-width="1.6" fill="none"/><path d="M2478 1288 L2483 1283 L2483 1288 Z" fill="#CED0D6"/><rect x="458.0" y="1299.0" width="2041.0" height="184.0" rx="0.0" fill="#1E1F22" /><rect x="458.0" y="1299.0" width="766.0" height="39.0" rx="0.0" fill="#2B2D30" /><rect x="495.0" y="1299.0" width="1.0" height="81.0" rx="0.0" fill="#393B40" /><rect x="458.0" y="1379.0" width="766.0" height="1.0" rx="0.0" fill="#393B40" /><rect x="1224.0" y="1299.0" width="1.0" height="81.0" rx="0.0" fill="#393B40" /><rect x="505.0" y="1309.5" width="20.0" height="18.0" rx="2.5" fill="none" stroke="#CED0D6" stroke-width="1.6"/><path d="M511.5 1309.5 v18" stroke="#CED0D6" stroke-width="1.6" fill="none" stroke-linecap="round" stroke-linejoin="round" /><path d="M1143.5 1310.5 h17 l-6.5 8 v8 l-4 -2 v-6 z" stroke="#CED0D6" stroke-width="1.6" fill="none" stroke-linecap="round" stroke-linejoin="round" /><path d="M1195 1314 L1199 1309.5 L1203 1314 Z M1195 1320 L1199 1324.5 L1203 1320 Z" fill="#8C8F96"/><rect x="1411.0" y="1411.5" width="135.5" height="53.0" rx="10.0" fill="#2B2D30" stroke="#43454A" stroke-width="1"/><path d="M1470.5 1438.2 L1476.0 1443.8 L1481.5 1438.2" stroke="#CED0D6" stroke-width="1.6" fill="none" stroke-linecap="round" stroke-linejoin="round" /><line x1="1495.0" y1="1425.0" x2="1495.0" y2="1451.0" stroke="#43454A" stroke-width="1.5"/><circle cx="1519.7" cy="1430.0" r="2" fill="#CED0D6"/><circle cx="1519.7" cy="1438.0" r="2" fill="#CED0D6"/><circle cx="1519.7" cy="1446.0" r="2" fill="#CED0D6"/><path d="M143.9 1500.5 L149.4 1506.0 L143.9 1511.5" stroke="#A8ADB5" stroke-width="1.6" fill="none" stroke-linecap="round" stroke-linejoin="round" /><path d="M414.1 1500.5 L419.6 1506.0 L414.1 1511.5" stroke="#A8ADB5" stroke-width="1.6" fill="none" stroke-linecap="round" stroke-linejoin="round" /><g transform="translate(435.5 1495.0) scale(0.980)"><path d="M0.5 1.5 C3 0.5 7 2 10 5.5 C12 8 13.5 12 14.5 13.5 C16 15 19 15.5 21 16.5 L17.5 17.5 L21 20.5 M0.5 1.5 C2 4 4 7 4.5 9 C4 11 4 13 5 14.5 L6.5 11.5 L9.5 16.5" stroke="#1AA7E8" stroke-width="1.53" fill="none" stroke-linejoin="round" stroke-linecap="round"/><circle cx="5.5" cy="4.5" r="0.7" fill="#1AA7E8"/></g><path d="M2515 1502 h14 a1.5 1.5 0 0 1 1.5 1.5 v9 a1.5 1.5 0 0 1 -1.5 1.5 h-14 a1.5 1.5 0 0 1 -1.5 -1.5 v-9 a1.5 1.5 0 0 1 1.5 -1.5 z M2525 1502 v-4 a4 4 0 0 1 8 0 v1.5" stroke="#A8ADB5" stroke-width="1.8" fill="none" stroke-linecap="round" stroke-linejoin="round" /></svg><div id="t1" class="t" style="left:74.8px;top:14.0px;line-height:30px;font-size:19.0px;color:#DFE1E5;font-weight:normal;font-family:'Liberation Sans', sans-serif;transform:scaleX(0.9235);">文件(<u>F</u>)</div><div id="t2" class="t" style="left:151.8px;top:14.0px;line-height:30px;font-size:19.0px;color:#DFE1E5;font-weight:normal;font-family:'Liberation Sans', sans-serif;transform:scaleX(0.9030);">编辑(<u>E</u>)</div><div id="t3" class="t" style="left:227.8px;top:14.0px;line-height:30px;font-size:19.0px;color:#DFE1E5;font-weight:normal;font-family:'Liberation Sans', sans-serif;transform:scaleX(0.9346);">视图(<u>V</u>)</div><div id="t4" class="t" style="left:307.6px;top:14.0px;line-height:30px;font-size:19.0px;color:#DFE1E5;font-weight:normal;font-family:'Liberation Sans', sans-serif;transform:scaleX(0.9691);">导航(<u>N</u>)</div><div id="t5" class="t" style="left:390.0px;top:14.0px;line-height:30px;font-size:19.0px;color:#DFE1E5;font-weight:normal;font-family:'Liberation Sans', sans-serif;transform:scaleX(0.9163);">代码(<u>C</u>)</div><div id="t6" class="t" style="left:470.2px;top:14.0px;line-height:30px;font-size:19.0px;color:#DFE1E5;font-weight:normal;font-family:'Liberation Sans', sans-serif;transform:scaleX(0.9209);">重构(<u>R</u>)</div><div id="t7" class="t" style="left:548.6px;top:14.0px;line-height:30px;font-size:19.0px;color:#DFE1E5;font-weight:normal;font-family:'Liberation Sans', sans-serif;transform:scaleX(0.9427);">运行(<u>U</u>)</div><div id="t8" class="t" style="left:629.0px;top:14.0px;line-height:30px;font-size:19.0px;color:#DFE1E5;font-weight:normal;font-family:'Liberation Sans', sans-serif;transform:scaleX(0.9203);">工具(<u>T</u>)</div><div id="t9" class="t" style="left:705.4px;top:14.0px;line-height:30px;font-size:19.0px;color:#DFE1E5;font-weight:normal;font-family:'Liberation Sans', sans-serif;transform:scaleX(0.9397);">Git(<u>G</u>)</div><div id="t10" class="t" style="left:772.7px;top:14.0px;line-height:30px;font-size:19.0px;color:#DFE1E5;font-weight:normal;font-family:'Liberation Sans', sans-serif;transform:scaleX(0.9520);">窗口(<u>W</u>)</div><div id="t11" class="t" style="left:858.2px;top:14.0px;line-height:30px;font-size:19.0px;color:#DFE1E5;font-weight:normal;font-family:'Liberation Sans', sans-serif;transform:scaleX(0.9520);">帮助(<u>H</u>)</div><div id="t12" class="t" style="left:34.0px;top:76.0px;line-height:32px;font-size:20.0px;color:#FFFFFF;font-weight:normal;font-family:'Liberation Mono', monospace;transform:scaleX(0.8953);">MB</div><div id="t13" class="t" style="left:69.5px;top:76.5px;line-height:30px;font-size:19.0px;color:#DFE1E5;font-weight:normal;font-family:'Liberation Sans', sans-serif;transform:scaleX(0.9814);">mysql_base</div><div id="t14" class="t" style="left:236.0px;top:76.5px;line-height:30px;font-size:19.0px;color:#DFE1E5;font-weight:normal;font-family:'Liberation Sans', sans-serif;transform:scaleX(0.9421);">版本控制</div><div id="t15" class="t" style="left:111.0px;top:137.5px;line-height:30px;font-size:19.0px;color:#DFE1E5;font-weight:normal;font-family:'Liberation Sans', sans-serif;transform:scaleX(0.9968);">console_2 [MySQL-@192.168.128.128]</div><div id="t16" class="t" style="left:312.4px;top:195.5px;line-height:28px;font-size:18.0px;color:#DFE1E5;font-weight:normal;font-family:'Liberation Sans', sans-serif;transform:scaleX(0.8273);">Tx: 自动</div><div id="t17" class="t" style="left:473.0px;top:195.5px;line-height:28px;font-size:18.0px;color:#DFE1E5;font-weight:normal;font-family:'Liberation Sans', sans-serif;transform:scaleX(0.9113);">Playground</div><div id="t18" class="t" style="left:2418.6px;top:196.5px;line-height:28px;font-size:18.0px;color:#DFE1E5;font-weight:normal;font-family:'Liberation Sans', sans-serif;transform:scaleX(0.9139);">itcast</div><div class="ln" style="top:243.5px;color:#4B5059">251</div><div class="ln" style="top:276.5px;color:#4B5059">252</div><div class="ln" style="top:309.5px;color:#4B5059">253</div><div class="ln" style="top:342.5px;color:#4B5059">254</div><div class="ln" style="top:375.5px;color:#4B5059">255</div><div class="ln" style="top:408.5px;color:#4B5059">256</div><div class="ln" style="top:441.5px;color:#4B5059">257</div><div class="ln" style="top:474.5px;color:#4B5059">258</div><div class="ln" style="top:507.5px;color:#4B5059">259</div><div class="ln" style="top:540.5px;color:#4B5059">260</div><div class="ln" style="top:573.5px;color:#4B5059">261</div><div class="ln" style="top:606.5px;color:#4B5059">262</div><div class="ln" style="top:639.5px;color:#4B5059">263</div><div class="ln" style="top:672.5px;color:#4B5059">264</div><div class="ln" style="top:705.5px;color:#4B5059">265</div><div class="ln" style="top:738.5px;color:#4B5059">266</div><div class="ln" style="top:771.5px;color:#4B5059">267</div><div class="ln" style="top:804.5px;color:#4B5059">268</div><div class="ln" style="top:837.5px;color:#4B5059">269</div><div class="ln" style="top:870.5px;color:#4B5059">270</div><div class="ln" style="top:903.5px;color:#4B5059">271</div><div class="ln" style="top:936.5px;color:#A1A3AB">272</div><div class="ln" style="top:969.5px;color:#4B5059">273</div><div class="ln" style="top:1002.5px;color:#4B5059">274</div><div class="cl" style="top:244.8px"><span style="color:#7A7E85">-- ----------------------------------------------------------</span></div><div class="cl" style="top:277.8px"><span style="color:#CF8E6D">create</span> <span style="color:#CF8E6D">procedure</span> <span style="color:#56A8F5;font-style:italic">p6</span>(<span style="color:#CF8E6D">in</span> month <span style="color:#CF8E6D">int</span>)</div><div class="cl" style="top:310.8px"><span style="color:#CF8E6D">begin</span></div><div class="cl" style="top:343.8px">    <span style="color:#CF8E6D">declare</span> result <span style="color:#CF8E6D">varchar</span>(<span style="color:#2AACB8">10</span>);</div><div class="cl" style="top:409.8px">    <span style="color:#CF8E6D">case</span></div><div class="cl" style="top:442.8px">        <span style="color:#CF8E6D">when</span> month &gt;=<span style="color:#2AACB8">1</span> <span style="color:#CF8E6D">and</span> month &lt;= <span style="color:#2AACB8">3</span> <span style="color:#CF8E6D">then</span></div><div class="cl" style="top:475.8px">            <span style="color:#CF8E6D">set</span> result := <span style="color:#6AAB73">'<span class="cj">第一季度</span>'</span>;</div><div class="cl" style="top:508.8px">        <span style="color:#CF8E6D">when</span> month &gt;=<span style="color:#2AACB8">4</span> <span style="color:#CF8E6D">and</span> month &lt;= <span style="color:#2AACB8">6</span> <span style="color:#CF8E6D">then</span></div><div class="cl" style="top:541.8px">            <span style="color:#CF8E6D">set</span> result := <span style="color:#6AAB73">'<span class="cj">第二季度</span>'</span>;</div><div class="cl" style="top:574.8px">        <span style="color:#CF8E6D">when</span> month &gt;=<span style="color:#2AACB8">7</span> <span style="color:#CF8E6D">and</span> month &lt;= <span style="color:#2AACB8">9</span> <span style="color:#CF8E6D">then</span></div><div class="cl" style="top:607.8px">            <span style="color:#CF8E6D">set</span> result := <span style="color:#6AAB73">'<span class="cj">第三季度</span>'</span>;</div><div class="cl" style="top:640.8px">        <span style="color:#CF8E6D">when</span> month &gt;=<span style="color:#2AACB8">10</span> <span style="color:#CF8E6D">and</span> month &lt;= <span style="color:#2AACB8">12</span> <span style="color:#CF8E6D">then</span></div><div class="cl" style="top:673.8px">            <span style="color:#CF8E6D">set</span> result := <span style="color:#6AAB73">'<span class="cj">第四季度</span>'</span>;</div><div class="cl" style="top:706.8px">        <span style="color:#CF8E6D">else</span></div><div class="cl" style="top:739.8px">            <span style="color:#CF8E6D">set</span> result := <span style="color:#6AAB73">'<span class="cj">非法参数</span>'</span>;</div><div class="cl" style="top:772.8px">    <span style="color:#CF8E6D">end</span> <span style="color:#CF8E6D">case</span>;</div><div class="cl" style="top:838.8px">    <span style="color:#CF8E6D">select</span> <span style="color:#56A8F5;font-style:italic">concat</span>(<span style="color:#6AAB73">'<span class="cj">您输入的月份为：</span>'</span>,month,<span style="color:#6AAB73">'<span class="cj">，所属季度为：</span>'</span>,result);</div><div class="cl" style="top:871.8px"><span style="color:#CF8E6D">end</span>;</div><div class="cl" style="top:937.8px"><span style="color:#CF8E6D">call</span> <span style="color:#56A8F5;font-style:italic">p6</span>(<span class="hint">month</span><span style="color:#2AACB8">5</span>);</div><div id="t19" class="t" style="left:2406.0px;top:241.0px;line-height:30px;font-size:19.0px;color:#A8ADB5;font-weight:normal;font-family:'Liberation Sans', sans-serif;transform:scaleX(0.9792);">16</div><div id="t20" class="t" style="left:80.0px;top:1150.5px;line-height:30px;font-size:19.0px;color:#DFE1E5;font-weight:bold;font-family:'Liberation Sans', sans-serif;transform:scaleX(0.9342);">服务</div><div id="t21" class="t" style="left:80.0px;top:1207.5px;line-height:28px;font-size:18.0px;color:#DFE1E5;font-weight:normal;font-family:'Liberation Sans', sans-serif;transform:scaleX(0.8500);">Tx</div><div id="t22" class="t" style="left:174.0px;top:1258.0px;line-height:30px;font-size:19.0px;color:#DFE1E5;font-weight:normal;font-family:'Liberation Sans', sans-serif;transform:scaleX(0.9810);">Database</div><div id="t23" class="t" style="left:201.7px;top:1294.5px;line-height:30px;font-size:19.0px;color:#DFE1E5;font-weight:normal;font-family:'Liberation Sans', sans-serif;transform:scaleX(1.0055);">@localhost</div><div id="t24" class="t" style="left:230.0px;top:1330.0px;line-height:30px;font-size:19.0px;color:#DFE1E5;font-weight:normal;font-family:'Liberation Sans', sans-serif;transform:scaleX(0.9582);">console_7</div><div id="t25" class="t" style="left:201.7px;top:1366.3px;line-height:30px;font-size:19.0px;color:#DFE1E5;font-weight:normal;font-family:'Liberation Sans', sans-serif;transform:scaleX(1.0004);">MySQL-@192.168.128.128</div><div id="t26" class="t" style="left:230.0px;top:1402.0px;line-height:30px;font-size:19.0px;color:#DFE1E5;font-weight:normal;font-family:'Liberation Sans', sans-serif;transform:scaleX(0.9582);">console_2</div><div id="t27" class="t" style="left:324.0px;top:1402.0px;line-height:30px;font-size:19.0px;color:#6F737A;font-weight:normal;font-family:'Liberation Sans', sans-serif;transform:scaleX(0.9902);">150 ms</div><div id="t28" class="t" style="left:258.0px;top:1438.0px;line-height:30px;font-size:19.0px;color:#DFE1E5;font-weight:normal;font-family:'Liberation Sans', sans-serif;transform:scaleX(0.9662);">console_2</div><div id="t29" class="t" style="left:352.0px;top:1438.0px;line-height:30px;font-size:19.0px;color:#6F737A;font-weight:normal;font-family:'Liberation Sans', sans-serif;transform:scaleX(0.9950);">150 ms</div><div id="t30" class="t" style="left:508.5px;top:1208.0px;line-height:30px;font-size:19.0px;color:#DFE1E5;font-weight:normal;font-family:'Liberation Sans', sans-serif;transform:scaleX(0.9474);">输出</div><div id="t31" class="t" style="left:612.7px;top:1207.0px;line-height:30px;font-size:19.0px;color:#DFE1E5;font-weight:normal;font-family:'Liberation Sans', sans-serif;transform:scaleX(0.9753);">Result 37</div><div id="t32" class="t" style="left:2213.0px;top:1260.0px;line-height:28px;font-size:18.0px;color:#DFE1E5;font-weight:normal;font-family:'Liberation Sans', sans-serif;transform:scaleX(0.7835);">CSV</div><div id="gh" class="t" style="left:534px;top:1306px;line-height:28px;font-size:19px;color:#DFE1E5;-webkit-text-stroke:0.15px #DFE1E5;font-family:'Liberation Mono',monospace;transform:scaleX(1.0216);">concat('<span class="cj2">您输入的月份为：</span>',month,'<span class="cj2">，所属季度为：</span>',result)</div><div id="t33" class="t" style="left:472.0px;top:1347.0px;line-height:28px;font-size:18.0px;color:#6F737A;font-weight:normal;font-family:'Liberation Sans', sans-serif;transform:scaleX(0.9984);">1</div><div id="gd" class="t" style="left:502px;top:1347px;line-height:28px;font-size:19px;color:#BCBEC4;font-family:'Liberation Mono',monospace;transform:scaleX(0.9951);">您输入的月份为：5，所属季度为：第二季度</div><div id="t34" class="t" style="left:1430.0px;top:1426.0px;line-height:28px;font-size:18.0px;color:#DFE1E5;font-weight:normal;font-family:'Liberation Sans', sans-serif;transform:scaleX(0.9389);">1 行</div><div id="t35" class="t" style="left:20.8px;top:1491.0px;line-height:30px;font-size:19.0px;color:#A8ADB5;font-weight:normal;font-family:'Liberation Sans', sans-serif;transform:scaleX(0.9439);">数据库控制台</div><div id="t36" class="t" style="left:165.0px;top:1491.0px;line-height:30px;font-size:19.0px;color:#A8ADB5;font-weight:normal;font-family:'Liberation Sans', sans-serif;transform:scaleX(1.0017);">MySQL-@192.168.128.128</div><div id="t37" class="t" style="left:465.0px;top:1491.0px;line-height:30px;font-size:19.0px;color:#A8ADB5;font-weight:normal;font-family:'Liberation Sans', sans-serif;transform:scaleX(0.9968);">console_2 [MySQL-@192.168.128.128]</div><div id="t38" class="t" style="left:2114.0px;top:1491.0px;line-height:30px;font-size:19.0px;color:#A8ADB5;font-weight:normal;font-family:'Liberation Sans', sans-serif;transform:scaleX(0.9962);">272:1 (11 字符)</div><div id="t39" class="t" style="left:2265.0px;top:1491.0px;line-height:30px;font-size:19.0px;color:#A8ADB5;font-weight:normal;font-family:'Liberation Sans', sans-serif;transform:scaleX(0.8463);">CRLF</div><div id="t40" class="t" style="left:2333.0px;top:1491.0px;line-height:30px;font-size:19.0px;color:#A8ADB5;font-weight:normal;font-family:'Liberation Sans', sans-serif;transform:scaleX(0.9475);">UTF-8</div><div id="t41" class="t" style="left:2415.0px;top:1491.0px;line-height:30px;font-size:19.0px;color:#A8ADB5;font-weight:normal;font-family:'Liberation Sans', sans-serif;transform:scaleX(0.9608);">4 个空格</div><script>(function(){var W={"t1":57.5,"t2":57.2,"t3":59.2,"t4":62.4,"t5":59,"t6":59.3,"t7":60.7,"t8":57.3,"t9":48.6,"t10":65.3,"t11":61.3,"t12":21.5,"t13":99.5,"t14":71.6,"t15":333,"t16":54.6,"t17":83,"t18":38.4,"t19":20.7,"t20":35.5,"t21":17,"t22":79.8,"t23":94.8,"t24":83,"t25":231.7,"t26":83,"t27":61.7,"t28":83.7,"t29":62,"t30":36,"t31":78.3,"t32":29,"gh":594.0,"t33":10,"gd":370.6,"t34":31,"t35":107.6,"t36":232,"t37":333,"t38":128,"t39":42,"t40":51,"t41":70};for(var k in W){var e=document.getElementById(k);if(!e)continue;var o=e.style.transform;e.style.transform="none";var w=e.getBoundingClientRect().width;if(w>0){var r=W[k]/w;if(r>0.55&&r<1.6){e.style.transform="scaleX("+r.toFixed(4)+")";}else{e.style.transform=o;}}else{e.style.transform=o;}}})();</script></body></html>
